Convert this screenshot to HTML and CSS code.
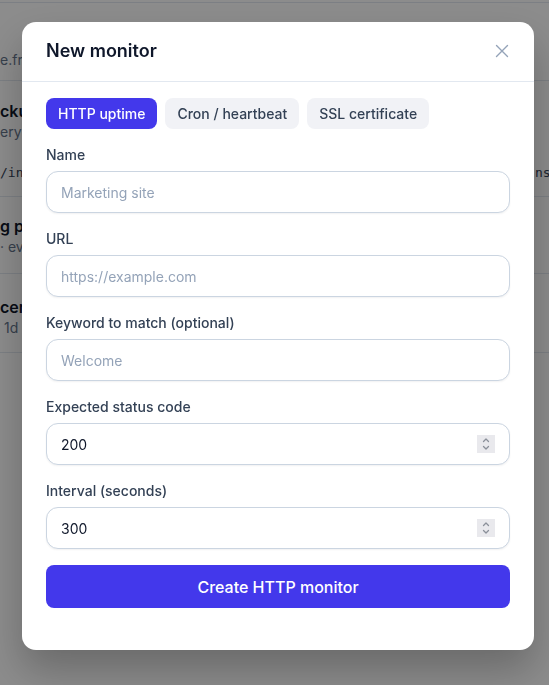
FILE: index.html
```html
<!DOCTYPE html>
<html lang="en">
<head>
<meta charset="utf-8">
<title>New monitor</title>
<link rel="stylesheet" href="styles.css">
</head>
<body>
<div class="page">
  <div class="topbar"></div>
  <div class="row row-1">
    <div class="cell">
      <div class="sub">e.fr</div>
    </div>
  </div>
  <div class="row row-2">
    <div class="cell">
      <div class="title">cku</div>
      <div class="sub">ery 1</div>
      <div class="mono">/in</div>
    </div>
    <div class="cell-right">
      <div class="mono">ns</div>
    </div>
  </div>
  <div class="row row-3">
    <div class="cell">
      <div class="title">g p</div>
      <div class="sub">· ev</div>
    </div>
  </div>
  <div class="row row-4">
    <div class="cell">
      <div class="title">cer</div>
      <div class="sub">&nbsp;1d</div>
    </div>
  </div>
</div>

<div class="overlay">
  <div class="modal" role="dialog" aria-labelledby="modal-title">
    <div class="modal-header">
      <h2 id="modal-title" class="modal-title">New monitor</h2>
      <button class="close-btn" aria-label="Close">
        <svg width="14" height="14" viewBox="0 0 14 14" fill="none" stroke="#94a3b8" stroke-width="1.4" stroke-linecap="round">
          <path d="M1.5 1.5 L12.5 12.5 M12.5 1.5 L1.5 12.5"/>
        </svg>
      </button>
    </div>
    <form class="modal-body">
      <div class="tabs">
        <button type="button" class="tab active">HTTP uptime</button>
        <button type="button" class="tab">Cron / heartbeat</button>
        <button type="button" class="tab">SSL certificate</button>
      </div>
      <label class="field">
        <span class="label">Name</span>
        <span class="input-box"><input class="input" type="text" placeholder="Marketing site"></span>
      </label>
      <label class="field">
        <span class="label">URL</span>
        <span class="input-box"><input class="input" type="text" placeholder="https://example.com"></span>
      </label>
      <label class="field">
        <span class="label">Keyword to match (optional)</span>
        <span class="input-box"><input class="input" type="text" placeholder="Welcome"></span>
      </label>
      <label class="field">
        <span class="label">Expected status code</span>
        <span class="input-box">
          <input class="input" type="text" inputmode="numeric" value="200">
          <span class="spinner" aria-hidden="true">
            <svg width="18" height="18" viewBox="0 0 18 18" fill="none" stroke="#8b909a" stroke-width="1.3" stroke-linecap="round" stroke-linejoin="round">
              <path d="M6.5 6.5 L9 4 L11.5 6.5"/>
              <path d="M6.5 11.5 L9 14 L11.5 11.5"/>
            </svg>
          </span>
        </span>
      </label>
      <label class="field">
        <span class="label">Interval (seconds)</span>
        <span class="input-box">
          <input class="input" type="text" inputmode="numeric" value="300">
          <span class="spinner" aria-hidden="true">
            <svg width="18" height="18" viewBox="0 0 18 18" fill="none" stroke="#8b909a" stroke-width="1.3" stroke-linecap="round" stroke-linejoin="round">
              <path d="M6.5 6.5 L9 4 L11.5 6.5"/>
              <path d="M6.5 11.5 L9 14 L11.5 11.5"/>
            </svg>
          </span>
        </span>
      </label>
      <button type="button" class="submit">Create HTTP monitor</button>
    </form>
  </div>
</div>
</body>
</html>
```

FILE: styles.css
```css
* { box-sizing: border-box; }

html, body {
  margin: 0;
  padding: 0;
  width: 549px;
  height: 685px;
  overflow: hidden;
  background: #ffffff;
  font-family: Inter, "Noto Sans", "Liberation Sans", sans-serif;
  color: #0f172a;
}

/* background page */
.page {
  width: 549px;
}
.topbar {
  height: 3px;
  border-bottom: 1px solid #e2e8f0;
}
.row {
  display: flex;
  justify-content: space-between;
  border-bottom: 1px solid #e2e8f0;
  white-space: nowrap;
}
.cell {
  width: 22px;
  overflow: hidden;
}
.cell-right {
  width: 14px;
  overflow: hidden;
  display: flex;
  flex-direction: column;
  justify-content: flex-end;
}
.row .title {
  font-size: 16px;
  line-height: 22px;
  font-weight: 600;
  color: #0f172a;
}
.row .sub {
  font-size: 14px;
  line-height: 20px;
  color: #64748b;
}
.mono {
  font-family: "DejaVu Sans Mono", "Liberation Mono", monospace;
  font-size: 13px;
  line-height: 20px;
  color: #334155;
}
.cell .mono { margin-top: 21px; }
.row-1 { padding: 47px 0 10px; }
.row-2 { padding: 19px 0 13px; }
.row-3 { padding: 18px 0 16px; }
.row-4 { padding: 22px 0 14px; }

/* overlay + modal */
.overlay {
  position: fixed;
  inset: 0;
  background: rgba(0, 0, 0, 0.45);
  display: flex;
  justify-content: flex-start;
  align-items: flex-start;
  padding: 22px 0 0 22px;
}
.modal {
  width: 512px;
  background: #ffffff;
  border-radius: 14px;
  box-shadow: 0 20px 40px rgba(0, 0, 0, 0.25);
}
.modal-header {
  display: flex;
  align-items: center;
  justify-content: space-between;
  padding: 14px 24px 16px;
  border-bottom: 1px solid #e2e8f0;
  height: 60px;
}
.modal-title {
  margin: 0;
  font-size: 18px;
  line-height: 28px;
  font-weight: 600;
  color: #0f172a;
}
.close-btn {
  border: 0;
  background: none;
  padding: 0;
  width: 14px;
  height: 14px;
  display: flex;
  cursor: pointer;
  margin-right: 1px;
}

.modal-body {
  margin: 0;
  padding: 16px 24px 42px;
  display: flex;
  flex-direction: column;
  gap: 16px;
}
.tabs {
  display: flex;
  gap: 8px;
}
.tab {
  border: 0;
  height: 31px;
  padding: 0 12px;
  border-radius: 8px;
  background: #f1f2f6;
  color: #334155;
  font-family: inherit;
  font-size: 14px;
  font-weight: 500;
}
.tab.active {
  background: #4338eb;
  color: #ffffff;
}

.field {
  display: flex;
  flex-direction: column;
  gap: 6px;
}
.label {
  font-size: 14px;
  line-height: 20px;
  font-weight: 500;
  color: #334155;
}
.input-box {
  display: flex;
  align-items: center;
  height: 42px;
  border: 1px solid #cbd5e1;
  border-radius: 12px;
  padding: 0 14px 0 14px;
  background: #ffffff;
  box-shadow: 0 1px 2px rgba(15, 23, 42, 0.06);
}
.input {
  flex: 1;
  min-width: 0;
  height: 100%;
  border: 0;
  padding: 0;
  font-family: inherit;
  font-size: 14px;
  color: #0f172a;
  background: transparent;
  outline: none;
}
.input::placeholder {
  color: #94a3b8;
}
.spinner {
  width: 18px;
  height: 18px;
  display: flex;
  background: #e9e9ed;
}

.submit {
  height: 43px;
  border: 0;
  border-radius: 8px;
  background: #4338eb;
  color: #ffffff;
  font-family: inherit;
  font-size: 16px;
  font-weight: 500;
}
```
